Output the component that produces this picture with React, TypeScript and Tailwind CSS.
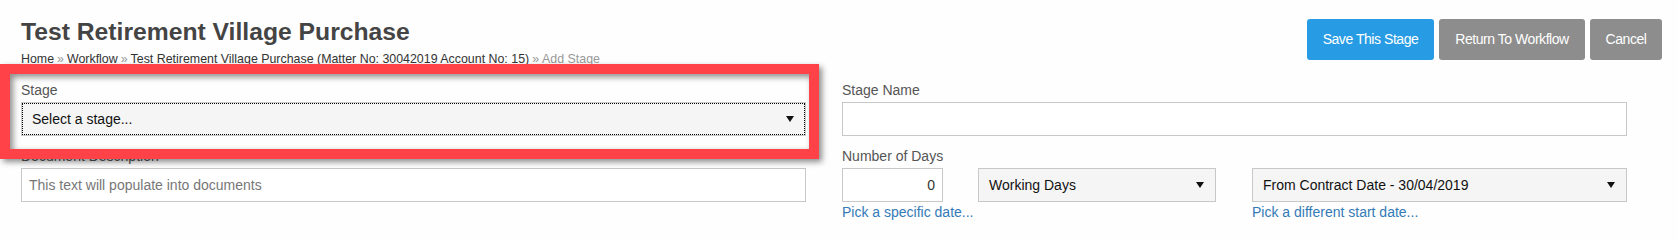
import React from 'react';

const font = { fontFamily: '"Liberation Sans", Arial, sans-serif' };

const Caret = () => (
  <svg width="8" height="6" viewBox="0 0 8 6" className="shrink-0">
    <polygon points="0,0 8,0 4,6" fill="#111" />
  </svg>
);

interface SelectBoxProps {
  value: string;
  focused?: boolean;
  className?: string;
}

const SelectBox: React.FC<SelectBoxProps> = ({ value, focused, className }) => (
  <div
    className={`h-[34px] flex items-center justify-between pl-[10px] pr-[11px] bg-[#f5f5f5] border border-[#c8c8c8] text-[14px] text-[#111] ${
      focused ? 'outline-1 outline-dotted outline-black -outline-offset-2' : ''
    } ${className ?? ''}`}
  >
    <span>{value}</span>
    <Caret />
  </div>
);

const Label: React.FC<{ children: React.ReactNode }> = ({ children }) => (
  <div className="text-[14px] leading-[20px] text-[#555] mb-[2px]">{children}</div>
);

const Sep = () => <span className="text-[#999] mx-[3px]">»</span>;

export default function App() {
  return (
    <div className="relative w-[1678px] h-[241px] bg-[#fefefe] overflow-hidden" style={font}>
      <div className="flex justify-between pl-[21px] pr-[16px]">
        <div className="pt-[17px]">
          <h1 className="text-[24.7px] leading-[30px] font-bold text-[#444]">
            Test Retirement Village Purchase
          </h1>
          <div className="mt-[5px] text-[12.4px] leading-[14px] text-[#333]">
            <span>Home</span>
            <Sep />
            <span>Workflow</span>
            <Sep />
            <span>Test Retirement Village Purchase (Matter No: 30042019 Account No: 15)</span>
            <Sep />
            <span className="text-[#999]">Add Stage</span>
          </div>
        </div>
        <div className="flex gap-[5px] pt-[19px] text-[14px] text-white tracking-[-0.45px]">
          <button className="w-[127px] h-[41px] rounded-[3px] bg-[#279ce4]">Save This Stage</button>
          <button className="w-[146px] h-[41px] rounded-[3px] bg-[#8d8d8d]">Return To Workflow</button>
          <button className="w-[72px] h-[41px] rounded-[3px] bg-[#8d8d8d]">Cancel</button>
        </div>
      </div>

      <div className="grid grid-cols-[785px_785px] gap-x-[36px] gap-y-[10px] pl-[21px] mt-[14px]">
        <div>
          <Label>Stage</Label>
          <SelectBox value="Select a stage..." focused />
        </div>
        <div>
          <Label>Stage Name</Label>
          <div className="h-[34px] bg-white border border-[#c8c8c8]" />
        </div>
        <div>
          <Label>Document Description</Label>
          <div className="h-[34px] flex items-center pl-[7px] bg-white border border-[#c8c8c8] text-[14px] text-[#777]">
            This text will populate into documents
          </div>
        </div>
        <div>
          <Label>Number of Days</Label>
          <div className="flex gap-[35px]">
            <div className="w-[101px]">
              <div className="h-[34px] flex items-center justify-end pr-[7px] bg-white border border-[#c8c8c8] text-[14px] text-[#333]">
                0
              </div>
              <a className="block text-[14px] leading-[20px] text-[#337ab7] whitespace-nowrap">Pick a specific date...</a>
            </div>
            <SelectBox value="Working Days" className="w-[238px]" />
            <div className="w-[375px] ml-px">
              <SelectBox value="From Contract Date - 30/04/2019" />
              <a className="block text-[14px] leading-[20px] text-[#337ab7]">Pick a different start date...</a>
            </div>
          </div>
        </div>
      </div>

      <div className="absolute left-0 top-[64px] w-[819px] h-[95px] border-[10px] border-[#ff4248] shadow-[3px_3px_6px_rgba(0,0,0,0.45),inset_3px_3px_6px_rgba(0,0,0,0.45)]" />
    </div>
  );
}
